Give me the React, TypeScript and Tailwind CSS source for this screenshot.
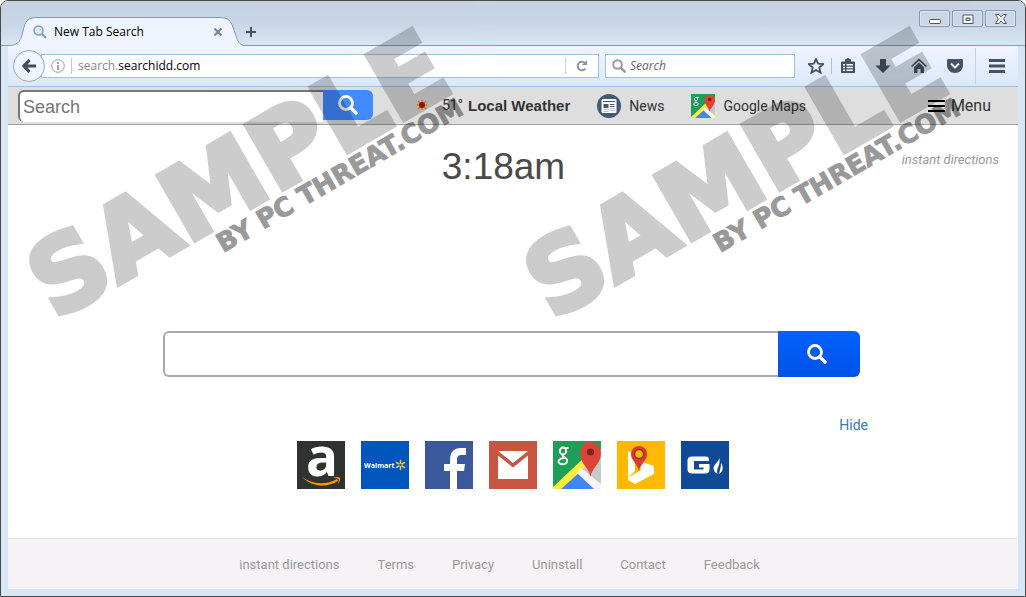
import type { ReactNode } from "react";

const quickLinks = [
  { name: "Amazon", icon: <AmazonIcon /> },
  { name: "Walmart", icon: <WalmartIcon /> },
  { name: "Facebook", icon: <FacebookIcon /> },
  { name: "Gmail", icon: <GmailIcon /> },
  { name: "Google Maps", icon: <MapsIcon className="h-12 w-12" /> },
  { name: "Bing Maps", icon: <BingMapsIcon /> },
  { name: "Gas prices", icon: <GasIcon /> },
];

const footerLinks = [
  "instant directions",
  "Terms",
  "Privacy",
  "Uninstall",
  "Contact",
  "Feedback",
];

export default function App() {
  return (
    <div className="relative flex min-h-screen flex-col overflow-hidden rounded-t-lg border border-[#4a4a4a] bg-[#d6e6f6] px-[7px] pb-[7px] font-['Liberation_Sans',Arial,sans-serif]">
      <TitleBar />
      <NavBar />
      <PageToolbar />
      <NewTabPage />
      <PageFooter />
      <Watermark className="left-0" />
      <Watermark className="left-[497px]" />
    </div>
  );
}

function TitleBar() {
  return (
    <header className="-mx-[7px] flex h-[45px] items-end bg-gradient-to-b from-[#c5d2e3] via-[#c8d6e7] to-[#d9e6f3] px-[7px] font-['Open_Sans',sans-serif] text-xs shadow-[inset_0_-1px_0_#7f9db5]">
      <div className="relative flex h-[29px] w-[237px] items-center pl-[25px]">
        <svg
          className="absolute inset-0 h-full w-full"
          viewBox="0 0 237 29"
          fill="none"
          aria-hidden="true"
        >
          <path
            d="M0 28.5C9 28.5 12 25 14 18L16 10C18 3 21 .5 29 .5H212C220 .5 223 4 225 10L228 19C230 26 233 28.5 237 28.5V29H0Z"
            fill="#f0f4ff"
          />
          <path
            d="M0 28.5C9 28.5 12 25 14 18L16 10C18 3 21 .5 29 .5H212C220 .5 223 4 225 10L228 19C230 26 233 28.5 237 28.5"
            stroke="#7f9db5"
          />
        </svg>
        <svg className="relative h-[14px] w-[14px]" viewBox="0 0 14 14" fill="none">
          <circle cx="5.5" cy="5.5" r="4.5" fill="#dcecf8" stroke="#7ea1be" strokeWidth="1.5" />
          <path d="m9 9 4 4" stroke="#8199ad" strokeWidth="2" />
        </svg>
        <span className="relative ml-[7px]">New Tab Search</span>
        <button className="absolute right-[23px]" aria-label="Close tab">
          <svg className="h-2 w-2" viewBox="0 0 8 8" stroke="#74899a" strokeWidth="2.2">
            <path d="m.5.5 7 7m0-7-7 7" />
          </svg>
        </button>
      </div>
      <button className="mb-[9px] ml-px" aria-label="New tab">
        <svg className="h-[10px] w-[10px]" viewBox="0 0 10 10" stroke="#455463" strokeWidth="2">
          <path d="M0 5h10M5 0v10" />
        </svg>
      </button>
      <div className="mt-[9px] mr-[2px] ml-auto flex gap-[2px] self-start">
        <WindowButton label="Minimize">
          <rect x=".5" y="6.5" width="11" height="4" rx="1" />
        </WindowButton>
        <WindowButton label="Maximize">
          <path d="M1 2h10v8.500H1zM4 5v2.500h4V5z" fillRule="evenodd" />
        </WindowButton>
        <WindowButton label="Close">
          <path d="M.5 1.500h3.500L6 4l2-2.500h3.500L8.500 6l3 4.500H8L6 8l-2 2.500H.5l3-4.500z" />
        </WindowButton>
      </div>
    </header>
  );
}

function WindowButton({ label, children }: { label: string; children: ReactNode }) {
  return (
    <button
      aria-label={label}
      className="flex h-[17px] w-[31px] items-center justify-center rounded-xs border border-[#8c98b8] bg-[#cad8e9] shadow-[inset_0_0_0_1px_#dbe5f1]"
    >
      <svg className="h-3 w-3" viewBox="0 0 12 12" fill="#fff" stroke="#55566a">
        {children}
      </svg>
    </button>
  );
}

function NavBar() {
  return (
    <nav className="flex h-[41px] items-center border-b border-[#a5bfd9] bg-gradient-to-b from-[#f0f4ff] to-[#dbe8fa] font-['Open_Sans',sans-serif] text-xs">
      <button
        aria-label="Back"
        className="z-10 ml-[5px] flex h-8 w-8 shrink-0 items-center justify-center rounded-full border border-[#8fa9c0] bg-[#f0f5ff]"
      >
        <svg className="h-[14px] w-[14px]" viewBox="0 0 14 14" fill="none" stroke="#434e58" strokeWidth="3.200">
          <path d="M7.500 1 2 7l5.500 6M2 7h12" />
        </svg>
      </button>
      <div className="-ml-1 flex h-6 flex-1 items-center border border-[#a9c1d6] bg-white">
        <svg className="ml-[9px] h-[14px] w-[14px] shrink-0" viewBox="0 0 14 14" fill="none" stroke="#999">
          <circle cx="7" cy="7" r="6.300" />
          <path d="M7 6v5M7 3v2" strokeWidth="1.800" />
        </svg>
        <span className="mx-[6px] h-4 w-px shrink-0 bg-[#c8c8c8]" />
        <div className="relative h-full flex-1">
          <input
            aria-label="Address"
            defaultValue="search.searchidd.com"
            className="h-full w-full bg-transparent text-transparent outline-none"
          />
          {/* The host name is darker than its subdomain */}
          <span
            aria-hidden="true"
            className="pointer-events-none absolute inset-0 flex items-center"
          >
            <span className="text-[#888]">search.</span>searchidd.com
          </span>
        </div>
        <span className="h-4 w-px bg-[#ccd5dd]" />
        <button aria-label="Reload" className="px-[10px]">
          <svg className="h-3 w-3" viewBox="0 0 12 12" fill="none" stroke="#8296a8" strokeWidth="2">
            <path d="M9.500 8.500A4.300 4.300 0 1 1 9 3" />
            <path d="M11 0v5H6z" fill="#8296a8" stroke="none" />
          </svg>
        </button>
      </div>
      <label className="ml-[6px] flex h-6 w-[190px] items-center border border-[#a9c1d6] bg-white">
        <svg className="ml-[6px] h-[14px] w-[14px] shrink-0" viewBox="0 0 14 14" fill="none" stroke="#999" strokeWidth="2">
          <circle cx="5.500" cy="5.500" r="4.300" />
          <path d="m8.500 8.500 5 5" strokeWidth="2.500" />
        </svg>
        <input
          aria-label="Search the web"
          placeholder="Search"
          className="ml-[4px] w-full min-w-0 italic outline-none placeholder:text-[#666]"
        />
      </label>
      <div className="flex items-center text-[#46535f]">
        <NavButton label="Bookmark">
          <path d="m8 1 2.100 4.700 5.100.5-3.900 3.400 1.200 5L8 12l-4.500 2.600 1.200-5L.8 6.200l5.100-.5z" fill="none" stroke="currentColor" strokeWidth="1.800" />
        </NavButton>
        <span className="-mx-px h-4 w-px bg-[#b5c2d0]" />
        <NavButton label="Bookmarks list">
          <path d="M2 3.500h12a1 1 0 0 1 1 1V14a1 1 0 0 1-1 1H2a1 1 0 0 1-1-1V4.500a1 1 0 0 1 1-1zM5 1.500 8 0l3 1.500V5H5z" />
          <path d="M3 6h2v1.500H3zm3.500 0H13v1.500H6.500zM3 8.800h2v1.500H3zm3.500 0H13v1.500H6.500zM3 11.600h2v1.500H3zm3.500 0H13v1.500H6.500z" fill="#f0f5ff" />
        </NavButton>
        <NavButton label="Downloads">
          <path d="M5 1h6v6.500h4.500L8 15 .5 7.500H5z" />
        </NavButton>
        <NavButton label="Home">
          <path d="m8 .5 8 7.500-1 1.200-7-6.500-7 6.500L0 8zM3 9.200l5-4.700 5 4.700V15H9.500v-4h-3v4H3z" />
        </NavButton>
        <NavButton label="Pocket">
          <path d="M1.500 1h13C15.500 1 16 1.500 16 2.500V7c0 4.500-3.500 8-8 8S0 11.500 0 7V2.500C0 1.500.5 1 1.500 1z" />
          <path d="m4 5.500 4 4 4-4" fill="none" stroke="#eaf1fd" strokeWidth="2" />
        </NavButton>
        <span className="mx-[2px] h-9 w-px bg-[#c4d2e2]" />
        <button aria-label="Open menu" className="mr-[13px] ml-[11px]">
          <svg className="h-4 w-4" viewBox="0 0 16 16" fill="currentColor">
            <path d="M0 1h16v3H0zM0 6.500h16v3H0zM0 12h16v3H0z" />
          </svg>
        </button>
      </div>
    </nav>
  );
}

function NavButton({ label, children }: { label: string; children: ReactNode }) {
  return (
    <button
      aria-label={label}
      className="flex w-9 justify-center first:ml-[5px] first:w-8 [&:nth-child(3)]:w-[34px]"
    >
      <svg className="h-4 w-4" viewBox="0 0 16 16" fill="currentColor">
        {children}
      </svg>
    </button>
  );
}

function PageToolbar() {
  return (
    <div className="flex h-[38px] items-center border-b border-[#a0a0a0] bg-[#dedede] pl-[10px] font-[Roboto,sans-serif] text-sm text-[#333]">
      <form className="flex h-8 font-['Liberation_Sans',Arial,sans-serif]">
        <input
          aria-label="Search"
          placeholder="Search"
          className="w-[305px] rounded-l-md border-t-2 border-l-2 border-[#777] bg-white pl-[3px] text-lg outline-none placeholder:text-[#757575]"
        />
        <button
          type="button"
          aria-label="Go"
          className="flex h-[30px] w-[50px] items-center justify-center rounded-r-md bg-[#448aff]"
        >
          <SearchGlyph className="h-5 w-5" />
        </button>
      </form>
      <a href="#weather" className="ml-[43px] flex items-center">
        <svg className="h-3 w-3" viewBox="0 0 12 12">
          <path d="M6 1v10M1 6h10M2 2l8 8M10 2l-8 8" stroke="#e8a33a" strokeWidth="1.500" />
          <circle cx="6" cy="6" r="3" fill="#d01000" />
        </svg>
        <span className="ml-[14px]">51°</span>
        <b className="ml-[5px] font-['Liberation_Sans',Arial,sans-serif] text-[15px]">Local Weather</b>
      </a>
      <a href="#news" className="ml-[27px] flex items-center gap-2">
        <svg className="h-6 w-6" viewBox="0 0 24 24">
          <circle cx="12" cy="12" r="12" fill="#445975" />
          <rect x="4.500" y="5" width="15" height="14" rx="1.500" fill="#fff" />
          <path d="M6 7h12v1H6zM6.500 10h5v4h-5zM13 10h4.500v1H13zM13 12h4.500v1H13z" fill="#445975" />
          <path d="M6.500 15.500h5M13 14.500h4.500M13 16.500h4.500M6.500 17.500h5" stroke="#b8c1cc" />
        </svg>
        News
      </a>
      <a href="#maps" className="ml-[27px] flex items-center gap-2">
        <MapsIcon className="h-6 w-6" />
        Google Maps
      </a>
      <button className="mr-[27px] ml-auto flex items-center gap-[6px] text-base">
        <svg className="h-[14px] w-[17px]" viewBox="0 0 17 14" fill="#000">
          <path d="M0 1h17v2H0zM0 6h17v2H0zM0 11h17v2H0z" />
        </svg>
        Menu
      </button>
    </div>
  );
}

function NewTabPage() {
  return (
    <main className="flex-1 bg-white">
      <div className="grid grid-cols-[1fr_auto_1fr] pt-[22px] pr-[19px]">
        <time className="col-start-2 text-[37px] leading-10 text-[#4a4a4a]">3:18am</time>
        <a
          href="#directions"
          className="mt-[3px] justify-self-end font-[Roboto,sans-serif] text-[13px] text-[#999] italic"
        >
          instant directions
        </a>
      </div>
      <div className="mt-36 pr-[3px]">
        <form className="mx-auto flex h-[46px] w-[697px] max-w-full">
          <input
            aria-label="Web search"
            className="min-w-0 flex-1 rounded-l-md border-2 border-r-0 border-[#aaa] px-3 text-lg outline-none"
          />
          <button
            type="button"
            aria-label="Search"
            className="flex w-[82px] items-center justify-center rounded-r-md bg-gradient-to-b from-[#0062ff] to-[#0052e6] pr-1"
          >
            <SearchGlyph className="h-5 w-5" />
          </button>
        </form>
      </div>
      <div className="mx-auto mt-[38px] flex w-[710px] max-w-full justify-end">
        <button className="font-[Roboto,sans-serif] text-sm leading-5 text-[#337ab7]">Hide</button>
      </div>
      <ul className="mt-[6px] mb-[49px] flex justify-center gap-4">
        {quickLinks.map((link) => (
          <li key={link.name}>
            <a href="#link" aria-label={link.name}>
              {link.icon}
            </a>
          </li>
        ))}
      </ul>
    </main>
  );
}

function PageFooter() {
  return (
    <footer className="flex h-[51px] items-center justify-center gap-[38px] border-t border-[#e5e5e5] bg-[#f7f2f6] pt-[2px] pr-[27px] font-[Roboto,sans-serif] text-[13px] text-[#999]">
      {footerLinks.map((label) => (
        <a key={label} href="#footer">
          {label}
        </a>
      ))}
    </footer>
  );
}

function Watermark({ className }: { className: string }) {
  return (
    <svg
      className={`pointer-events-none absolute top-0 h-[340px] w-[500px] overflow-visible ${className}`}
      viewBox="0 0 500 340"
      fill="#000"
      stroke="#000"
      fontFamily="DejaVu Sans, sans-serif"
      fontWeight="bold"
    >
      <g opacity=".2">
        <text transform="translate(54 320) rotate(-30)" fontSize="102" strokeWidth="5">
          SAMPLE
        </text>
      </g>
      <g opacity=".4">
        <text transform="translate(222 252) rotate(-30)" fontSize="26" strokeWidth="1">
          BY PC THREAT.COM
        </text>
      </g>
    </svg>
  );
}

function SearchGlyph({ className }: { className: string }) {
  return (
    <svg className={className} viewBox="0 0 20 20" fill="none" stroke="#fff">
      <circle cx="8" cy="8" r="6.500" strokeWidth="2.800" />
      <path d="m13 13 5 5" strokeWidth="3.500" strokeLinecap="round" />
    </svg>
  );
}

function AmazonIcon() {
  return (
    <svg className="h-12 w-12 overflow-visible" viewBox="0 0 48 48">
      <path d="M0 0h48v48H0z" fill="#2f3330" />
      <text x="9" y="35" fontSize="53" fontWeight="bold" fill="#fff" fontFamily="Open Sans, sans-serif">
        a
      </text>
      <path d="M5 36c11 8 25 8 35 2l1 2c-11 7-26 6-36-4z" fill="#f90" />
      <path d="M36 37c3-1.500 6-1.500 7 0 .5 2-.5 4-2 6 .5-2 1-4 .5-5-1-.8-3-.8-5.500-1z" fill="#f90" />
    </svg>
  );
}

function WalmartIcon() {
  return (
    <svg className="h-12 w-12" viewBox="0 0 48 48">
      <path d="M0 0h48v48H0z" fill="#0056bd" />
      <text x="3" y="27" fontSize="7" fontWeight="bold" fill="#fff" fontFamily="Open Sans, sans-serif">
        Walmart
      </text>
      <path
        d="M39.500 19.500v3M39.500 25.500v3M35.500 21.500l2.500 1.500M41 25l2.500 1.500M43.500 21.500 41 23M38 25l-2.500 1.500"
        stroke="#fdbb30"
        strokeWidth="1.500"
        strokeLinecap="round"
      />
    </svg>
  );
}

function FacebookIcon() {
  return (
    <svg className="h-12 w-12" viewBox="0 0 48 48">
      <path d="M0 0h48v48H0z" fill="#3b589b" />
      <path d="M25 48V30h-6v-7h6v-4c0-8 4-12 11-12h5v7h-4c-4 0-5 2-5 5v4h8l-1 7h-7v18z" fill="#fff" />
    </svg>
  );
}

function GmailIcon() {
  return (
    <svg className="h-12 w-12" viewBox="0 0 48 48">
      <path d="M0 0h48v48H0z" fill="#c75542" />
      <path d="M9 10h30L24 22z" fill="#fff" />
      <path d="M9 14.500 24 26.500l15-12V38H9z" fill="#fff" />
    </svg>
  );
}

function MapsIcon({ className }: { className: string }) {
  return (
    <svg className={className} viewBox="0 0 48 48">
      <path d="M0 0h48v48H0z" fill="#1e9e58" />
      <path d="M48 8v40H20L26 28z" fill="#c8c8c8" />
      <path d="M25 27 48 48H6z" fill="#4285f4" />
      <path d="M0 46 34 14l3 8L8 48H0z" fill="#ffeb3b" />
      <path d="m28 27 20 16v5h-7L24 32z" fill="#f4f4f6" />
      <path d="M37.500 36c-1-9-10.500-13-10.500-24a10.500 11 0 0 1 21 0c0 11-9.500 15-10.500 24z" fill="#dc4437" />
      <circle cx="37.500" cy="11" r="3.600" fill="#7c231c" />
      <g fill="none" stroke="#fff" strokeWidth="1.900">
        <ellipse cx="10" cy="10" rx="3.200" ry="3.500" />
        <path d="M11 7h4.500M10 13.500c-2 2 3 3 4 5 1.500 6-8.500 6-8.500 2 0-2 3-3.500 6-3.500" />
      </g>
    </svg>
  );
}

function BingMapsIcon() {
  return (
    <svg className="h-12 w-12" viewBox="0 0 48 48">
      <path d="M0 0h48v48H0z" fill="#ffb900" />
      <path d="m11 10 7 3v17l-7 7z" fill="#fff" />
      <path d="m22 20 15 5v8L18 43l-7-4v-2l13-8z" fill="#fff" />
      <path d="M22 30c-1-7-8-10-8-17a8 8 0 0 1 16 0c0 7-7 10-8 17z" fill="#d83b2f" />
      <circle cx="22" cy="13" r="4.500" fill="#ffb900" stroke="#a52c20" strokeWidth="1.500" />
    </svg>
  );
}

function GasIcon() {
  return (
    <svg className="h-12 w-12" viewBox="0 0 48 48">
      <path d="M0 0h48v48H0z" fill="#104a96" />
      <path
        d="M28 20v-1.500q0-3-3-3H11q-4.500 0-4.500 4v9q0 4 4.500 4h13.500q4 0 4-4V23H18v3.500h4.500v2H13v-8.500h9.500z"
        fill="#fff"
      />
      <path d="M38 15c2 5-5 7-5.500 12 0 3 2 5 4 6-2-6 4-8 1.500-18z" fill="#fff" />
      <path d="M40 22c3 4 2 9-2 11 1-4 2-7 2-11z" fill="#fff" />
    </svg>
  );
}
